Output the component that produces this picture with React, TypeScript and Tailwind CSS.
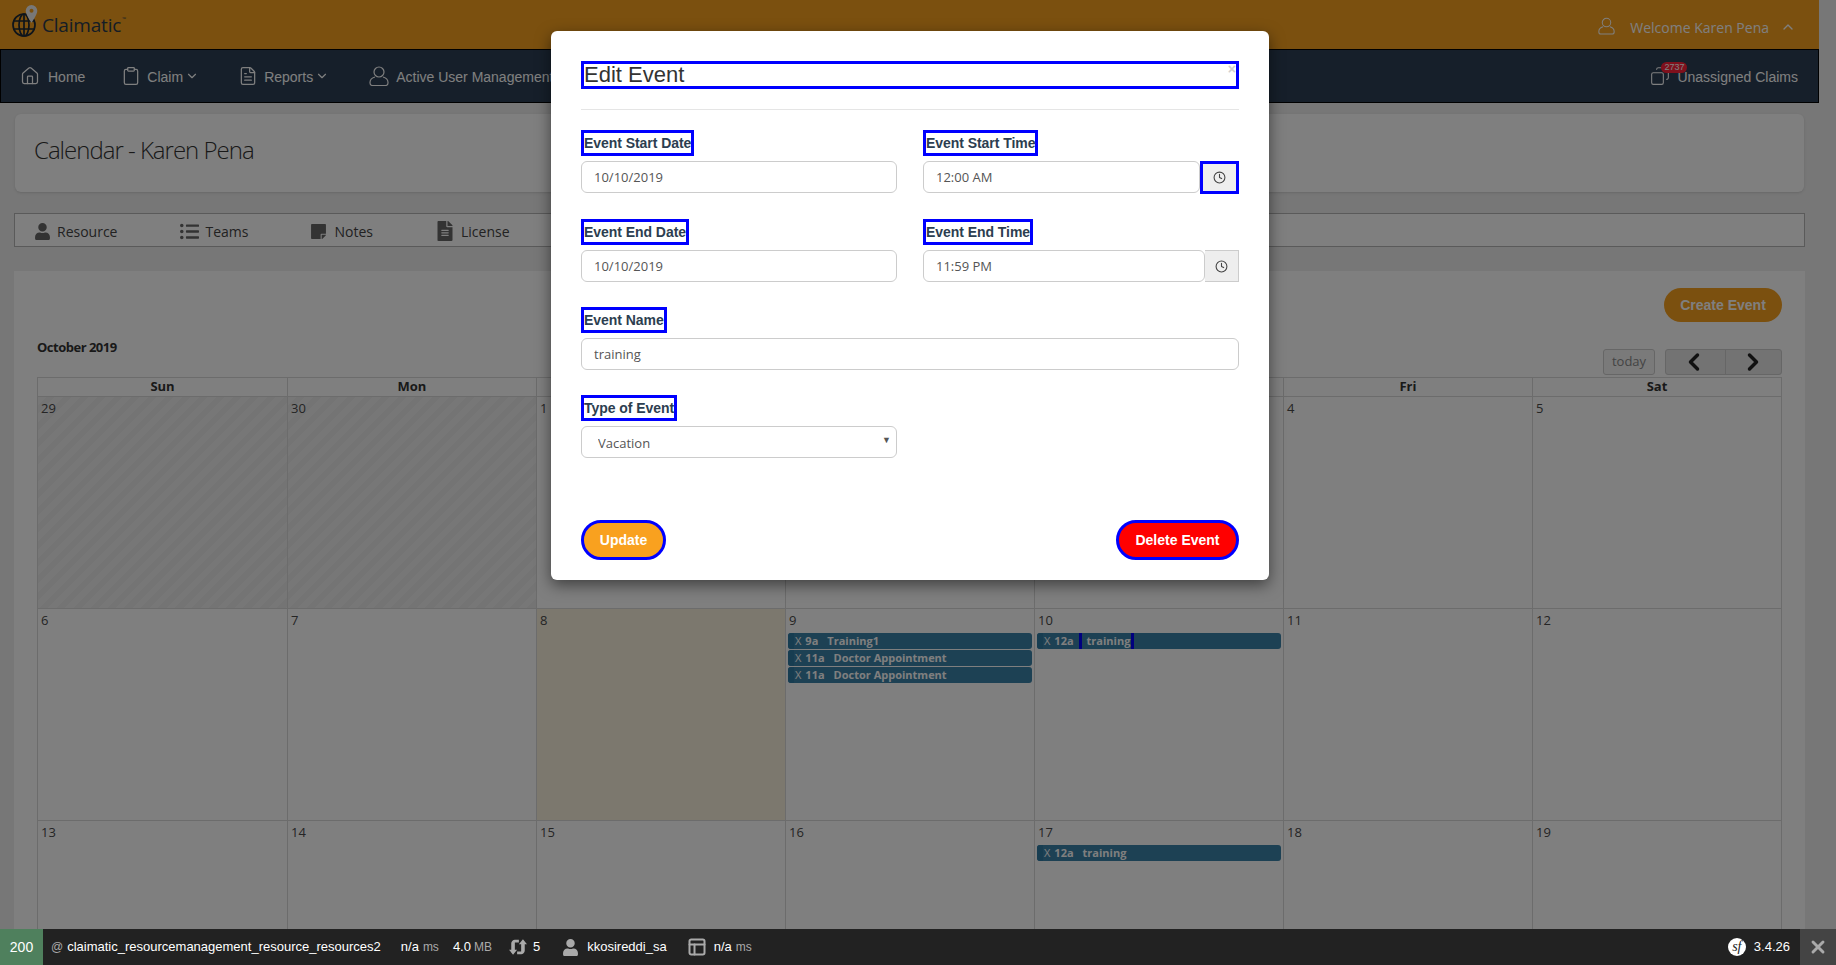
import { ChevronDown, ChevronLeft, ChevronRight, ChevronUp, Clipboard, Clock, Copy, FileText, Home, PanelsTopLeft, X } from 'lucide-react';
import { FaFileAlt, FaListUl, FaStickyNote, FaUser } from 'react-icons/fa';

const sans = 'font-["Liberation_Sans",Arial,sans-serif]';
const open = 'font-["Open_Sans",sans-serif]';

type CalEvent = { time: string; title: string; outlined?: boolean };

const days = ['Sun', 'Mon', 'Tue', 'Wed', 'Thu', 'Fri', 'Sat'];

const weeks: { n: number; striped?: boolean; today?: boolean; events?: CalEvent[] }[][] = [
    [{ n: 29, striped: true }, { n: 30, striped: true }, { n: 1 }, { n: 2 }, { n: 3 }, { n: 4 }, { n: 5 }],
    [
        { n: 6 },
        { n: 7 },
        { n: 8, today: true },
        {
            n: 9,
            events: [
                { time: '9a', title: 'Training1' },
                { time: '11a', title: 'Doctor Appointment' },
                { time: '11a', title: 'Doctor Appointment' },
            ],
        },
        { n: 10, events: [{ time: '12a', title: 'training', outlined: true }] },
        { n: 11 },
        { n: 12 },
    ],
    [
        { n: 13 },
        { n: 14 },
        { n: 15 },
        { n: 16 },
        { n: 17, events: [{ time: '12a', title: 'training' }] },
        { n: 18 },
        { n: 19 },
    ],
];

function UserOutline({ className }: { className?: string }) {
    return (
        <svg viewBox="0 0 20 20" fill="none" stroke="currentColor" strokeWidth="1.2" className={className}>
            <circle cx="10" cy="6" r="5" />
            <path d="M6 11C3 11.8 1 13.8 1 16.5v.5c0 1.5 1 2.5 2.500 2.500h13c1.500 0 2.500-1 2.500-2.500v-.5c0-2.700-2-4.700-5-5.500" />
        </svg>
    );
}

function EventBar({ event }: { event: CalEvent }) {
    return (
        <div className={`flex h-[16px] items-center overflow-hidden rounded-[3px] bg-[#3a82a8] text-[11px] leading-[16px] text-white ${open}`}>
            <span className="h-full w-[6px] shrink-0 bg-[#2f7aa3]" />
            <span className="ml-[1px] font-normal">X</span>
            <span className="ml-[4px] font-bold">{event.time}</span>
            {event.outlined ? (
                <span className="ml-[5px] flex h-full items-center border-x-[3px] border-[#0000ff] pl-[5px] pr-[1px] font-bold">{event.title}</span>
            ) : (
                <span className="ml-[9px] font-bold">{event.title}</span>
            )}
        </div>
    );
}

function Calendar() {
    return (
        <div className="w-[1745px] border-l border-t border-[#d8d8d8]">
            <div className="grid grid-cols-[250px_repeat(6,1fr)]">
                {days.map((d) => (
                    <div key={d} className={`h-[19px] border-b border-r border-[#d8d8d8] text-center text-[13px] font-bold leading-[17px] text-[#333] ${open}`}>
                        {d}
                    </div>
                ))}
            </div>
            {weeks.map((week) => (
                <div key={week[0].n} className="grid grid-cols-[250px_repeat(6,1fr)]">
                    {week.map((cell) => (
                        <div
                            key={cell.n}
                            className={`h-[212px] border-b border-r border-[#d8d8d8] ${
                                cell.striped
                                    ? 'bg-[repeating-linear-gradient(135deg,#eeeeee_0,#eeeeee_6px,#e9e9e9_6px,#e9e9e9_12px)]'
                                    : cell.today
                                      ? 'bg-[#f8f0dd]'
                                      : ''
                            }`}
                        >
                            <div className={`pl-[3px] pt-[2px] text-[13px] leading-[18px] text-[#4a4a4a] ${open}`}>{cell.n}</div>
                            <div className="mt-[4px] flex flex-col gap-[1px] px-[2px]">
                                {cell.events?.map((e, i) => <EventBar key={i} event={e} />)}
                            </div>
                        </div>
                    ))}
                </div>
            ))}
        </div>
    );
}

function Header() {
    return (
        <div className="flex h-[49px] w-[1819px] items-center justify-between bg-[#f7a01e] pl-[12px] pr-[23px]">
            <div className="flex items-start self-start pt-[4px]">
                <svg width="26" height="33" viewBox="0 0 26 33" className="text-[#1b2836]">
                    <g fill="none" stroke="currentColor" strokeWidth="1.7">
                        <circle cx="12" cy="21" r="11" />
                        <ellipse cx="12" cy="21" rx="5" ry="11" />
                        <path d="M12 10v22M1.500 17h21M1.500 25h21" />
                    </g>
                    <path d="M19.500 1a5.800 5.800 0 0 1 5.800 5.800c0 4-5.800 12-5.800 12s-5.800-8-5.800-12a5.800 5.800 0 0 1 5.800-5.800z" fill="#f0f0f0" />
                    <circle cx="19.500" cy="6.800" r="2" fill="#f7a01e" />
                </svg>
                <span className={`ml-[4px] mt-[9px] text-[19px] leading-[24px] tracking-[-0.2px] text-[#2a3a4c] ${open}`}>
                    Claimatic<sup className="ml-px align-[9px] text-[5px] leading-[0]">™</sup>
                </span>
            </div>
            <div className="flex items-center pt-[5px] text-white">
                <UserOutline className="-mt-[3px] h-[20px] w-[17px]" />
                <span className={`ml-[15px] text-[14px] ${open}`}>Welcome Karen Pena</span>
                <ChevronUp size={16} className="ml-[11px]" />
            </div>
        </div>
    );
}

function NavItem({ icon, label, caret, className }: { icon: React.ReactNode; label: string; caret?: boolean; className: string }) {
    return (
        <div className={`flex items-center text-white ${className}`}>
            {icon}
            <span className="pt-px text-[14px] leading-[20px]">{label}</span>
            {caret && <ChevronDown size={14} className="ml-[2px]" />}
        </div>
    );
}

function Nav() {
    return (
        <div className={`flex h-[54px] w-[1819px] items-center border border-black bg-[#2c3e54] pl-[19px] pr-[20px] ${sans}`}>
            <NavItem icon={<Home size={20} strokeWidth={1.5} className="mr-[8px]" />} label="Home" className="" />
            <NavItem icon={<Clipboard size={20} strokeWidth={1.5} className="mr-[6px]" />} label="Claim" caret className="ml-[36px]" />
            <NavItem icon={<FileText size={20} strokeWidth={1.5} className="mr-[6px]" />} label="Reports" caret className="ml-[39px]" />
            <NavItem icon={<UserOutline className="mr-[7px] h-[20px] w-[20px]" />} label="Active User Management" className="ml-[40px]" />
            <div className="ml-auto flex items-center text-white">
                <div className="relative mr-[7px]">
                    <Copy size={20} strokeWidth={1.3} className="-scale-x-100" />
                    <span className="absolute -top-[4px] left-[11px] rounded-full bg-[#ff2038] px-[3px] text-[9px] leading-[11px] text-white">2737</span>
                </div>
                <span className="pt-px text-[14px] leading-[20px]">Unassigned Claims</span>
            </div>
        </div>
    );
}

function Tab({ icon, label, className }: { icon: React.ReactNode; label: string; className: string }) {
    return (
        <div className={`flex items-center pt-[2px] text-[14px] text-[#444] ${open} ${className}`}>
            {icon}
            <span>{label}</span>
        </div>
    );
}

function Page() {
    return (
        <div className="h-[965px] w-[1836px] overflow-hidden bg-[#eeeeee]">
            <Header />
            <Nav />
            <div className="ml-[15px] mt-[11px] flex h-[78px] w-[1789px] items-center rounded-[6px] bg-white pb-[7px] pl-[19px] shadow-sm">
                <h1 className={`text-[24px] font-light tracking-[-1px] text-[#333] ${open}`}>Calendar - Karen Pena</h1>
            </div>
            <div className="ml-[14px] mt-[21px] flex h-[34px] w-[1791px] items-center border border-[#b5b5b5] bg-white pl-[19px]">
                <Tab icon={<FaUser size={17} className="mr-[6px] text-[#666]" />} label="Resource" className="" />
                <Tab icon={<FaListUl size={19} className="mr-[6px] text-[#666]" />} label="Teams" className="ml-[63px]" />
                <Tab icon={<FaStickyNote size={17} className="mr-[7px] text-[#666]" />} label="Notes" className="ml-[62px]" />
                <Tab icon={<FaFileAlt size={20} className="mr-[6px] text-[#666]" />} label="License" className="ml-[62px]" />
            </div>
            <div className="ml-[14px] mt-[24px] w-[1791px] bg-white pl-[23px] pr-[23px] pt-[17px]">
                <div className="flex justify-end">
                    <button className={`h-[34px] w-[118px] rounded-full bg-[#f7a01e] text-[14px] font-bold text-white ${sans}`}>Create Event</button>
                </div>
                <div className="mt-[14px] flex h-[39px] justify-between">
                    <div className={`text-[13px] font-bold leading-[22px] tracking-[-0.5px] text-[#333] ${open}`}>October 2019</div>
                    <div className="flex items-end">
                        <button className={`h-[26px] w-[52px] rounded-[3px] border border-[#ccc] bg-[#f5f5f5] text-[13px] text-[#888] ${open}`}>today</button>
                        <div className="ml-[10px] flex h-[26px] w-[117px] rounded-[3px] border border-[#ccc] bg-[#e6e6e6] text-[#222]">
                            <span className="flex flex-1 items-center justify-center border-r border-[#ccc] pr-[3px]">
                                <ChevronLeft size={28} strokeWidth={3} />
                            </span>
                            <span className="flex flex-1 items-center justify-center">
                                <ChevronRight size={28} strokeWidth={3} />
                            </span>
                        </div>
                    </div>
                </div>
                <div className="mt-[2px]">
                    <Calendar />
                </div>
            </div>
        </div>
    );
}

function Label({ children }: { children: React.ReactNode }) {
    return <label className="mb-[5px] block w-fit border-[3px] border-[#0000ff] text-[14px] font-bold leading-[20px] tracking-[-0.05px] text-[#2c3e50]">{children}</label>;
}

const inputClass = `h-[32px] w-full rounded-[6px] border border-[#cccccc] bg-white px-[12px] text-[13px] text-[#555] outline-none ${open}`;

function EditModal() {
    return (
        <div className={`absolute left-[551px] top-[31px] h-[549px] w-[718px] rounded-[6px] bg-white px-[30px] pt-[30px] shadow-[0_5px_15px_rgba(0,0,0,0.5)] ${sans}`}>
            <div className="relative h-[28px] border-[3px] border-[#0000ff] text-[22px] leading-[22px] text-[#333]">
                Edit Event
                <span className="absolute right-0 top-[-2px] text-[14px] font-bold leading-[14px] text-[#cfcfcf]">×</span>
            </div>
            <div className="mt-[20px] h-px bg-[#e5e5e5]" />
            <div className="mt-[20px] grid grid-cols-2 gap-x-[26px] gap-y-[25px]">
                <div>
                    <Label>Event Start Date</Label>
                    <input readOnly value="10/10/2019" className={inputClass} />
                </div>
                <div>
                    <Label>Event Start Time</Label>
                    <div className="flex items-start">
                        <input readOnly value="12:00 AM" className={`${inputClass} flex-1`} />
                        <span className="flex h-[33px] w-[39px] shrink-0 items-center justify-center border-[3px] border-[#0000ff] bg-[#eeeeee] text-[#444]">
                            <Clock size={13} />
                        </span>
                    </div>
                </div>
                <div>
                    <Label>Event End Date</Label>
                    <input readOnly value="10/10/2019" className={inputClass} />
                </div>
                <div>
                    <Label>Event End Time</Label>
                    <div className="flex items-start">
                        <input readOnly value="11:59 PM" className={`${inputClass} flex-1`} />
                        <span className="flex h-[32px] w-[34px] shrink-0 items-center justify-center border-y border-r border-[#ccc] bg-[#eeeeee] text-[#444]">
                            <Clock size={13} />
                        </span>
                    </div>
                </div>
                <div className="col-span-2">
                    <Label>Event Name</Label>
                    <input readOnly value="training" className={inputClass} />
                </div>
                <div>
                    <Label>Type of Event</Label>
                    <div className="relative">
                        <select defaultValue="Vacation" className={`${inputClass} appearance-none pl-[16px] pt-[3px]`}>
                            <option>Vacation</option>
                        </select>
                        <span className="absolute right-[6px] top-[8px] text-[9px] leading-[12px] text-[#555]">▼</span>
                    </div>
                </div>
            </div>
            <div className="mt-[62px] flex justify-between">
                <button className="h-[40px] w-[85px] rounded-full border-[3px] border-[#0000ff] bg-[#f9a11f] text-[14px] font-bold text-white">Update</button>
                <button className="h-[40px] w-[123px] rounded-full border-[3px] border-[#0000ff] bg-[#ff0000] text-[14px] font-bold text-white">Delete Event</button>
            </div>
        </div>
    );
}

function DebugToolbar() {
    return (
        <div className={`fixed bottom-0 left-0 flex h-[36px] w-full items-center bg-[#222222] text-[13px] text-white ${sans}`}>
            <span className="flex h-full w-[43px] items-center justify-center bg-[#4f805d] text-[14px] text-white">200</span>
            <span className="ml-[8px] text-[12px] text-[#aaa]">@</span>
            <span className="ml-[4px]">claimatic_resourcemanagement_resource_resources2</span>
            <span className="ml-[20px]">n/a</span>
            <span className="ml-[4px] text-[12px] text-[#aaa]">ms</span>
            <span className="ml-[14px]">4.0</span>
            <span className="ml-[3px] text-[12px] text-[#aaa]">MB</span>
            <svg width="18" height="18" viewBox="0 0 20 20" className="ml-[17px] text-[#aaa]" fill="currentColor">
                <path d="M7 2h4v3H6.500v8H9l-4.500 5.500L0 13h2.500V6a4 4 0 0 1 4.500-4z" />
                <path d="M13 18H9v-3h4.500V7H11l4.500-5.500L20 7h-2.500v7a4 4 0 0 1-4.500 4z" />
            </svg>
            <span className="ml-[6px]">5</span>
            <FaUser size={17} className="ml-[22px] text-[#aaa]" />
            <span className="ml-[8px]">kkosireddi_sa</span>
            <PanelsTopLeft size={20} strokeWidth={2.4} className="ml-[20px] text-[#aaa]" />
            <span className="ml-[7px]">n/a</span>
            <span className="ml-[4px] text-[12px] text-[#aaa]">ms</span>
            <div className="ml-auto flex h-full items-center">
                <span className="flex h-[18px] w-[18px] items-center justify-center rounded-full bg-white font-['Liberation_Serif',serif] text-[14px] italic leading-[18px] text-[#222]">sf</span>
                <span className="ml-[8px] text-[13px] text-white">3.4.26</span>
                <span className="ml-[10px] flex h-full w-[36px] items-center justify-center bg-[#444444] text-[#aaa]">
                    <X size={20} strokeWidth={3.5} />
                </span>
            </div>
        </div>
    );
}

export default function App() {
    return (
        <div className="relative h-[965px] w-[1836px] overflow-hidden">
            <Page />
            <div className="absolute inset-0 bg-black/50" />
            <EditModal />
            <DebugToolbar />
        </div>
    );
}
